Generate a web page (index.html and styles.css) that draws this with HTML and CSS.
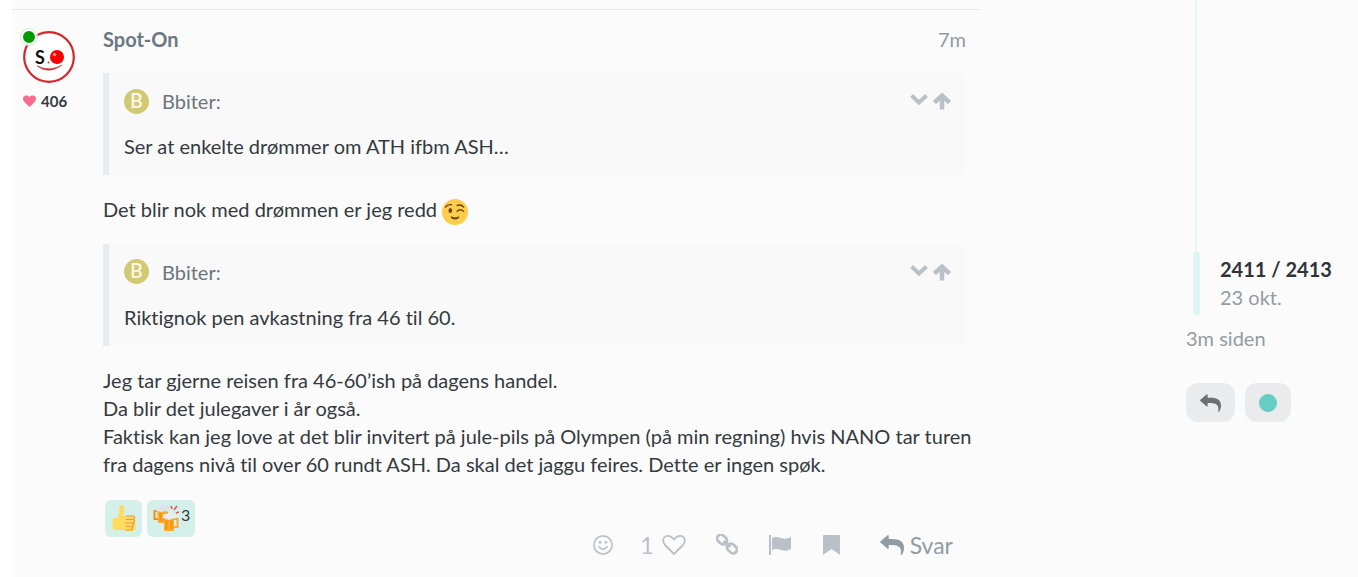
FILE: index.html
```
<!DOCTYPE html>
<html lang="nb">
<head>
    <meta charset="UTF-8">
    <meta name="viewport" content="width=device-width, initial-scale=1.0">
    <title>Spot-On</title>
    <link rel="stylesheet" href="styles.css">
</head>
<body>
    <svg class="sprite" aria-hidden="true">
        <symbol id="reply" viewBox="0 0 24 20"><path d="M.4 7.600Q-.2 7 .4 6.400L7.500.3Q8.700-.4 8.700 1V4H12c8 0 12 3 12 9 0 3-1 5-2 6.600-.5.800-1.500.4-1.200-.6 1-6-1.300-8.500-8.300-9H8.700v3q0 1.400-1.200.7z"/></symbol>
        <symbol id="chevron-down" viewBox="0 0 18 18"><path d="M1.500 3.500L9 10.500l7.500-7" fill="none" stroke="currentColor" stroke-width="4"/></symbol>
        <symbol id="arrow-up" viewBox="0 0 18 18"><path d="M1.500 10.500L9 3.500l7.500 7M9 4.500V17.500" fill="none" stroke="currentColor" stroke-width="4.500"/></symbol>
    </svg>
    <div class="page">
        <article class="post">
            <aside class="post-avatar">
                <div class="avatar">
                    <svg viewBox="0 0 52 52" aria-hidden="true">
                        <circle cx="26" cy="26" r="24.800" fill="#fff" stroke="#d2262b" stroke-width="2.200"/>
                        <circle cx="34" cy="26" r="7" fill="#f80000"/>
                        <circle cx="31.500" cy="23.500" r="1.800" fill="#ff8a80"/>
                        <circle cx="25.500" cy="31.500" r="1" fill="#c33"/>
                        <path d="M14 35q12 9 25-1q-12 7-25 1z" fill="#c8373a" stroke="#c8373a" stroke-width=".6"/>
                    </svg>
                    <span class="avatar-letter">S</span>
                    <span class="online"></span>
                </div>
                <div class="likes">
                    <svg viewBox="0 0 14 13" aria-hidden="true"><path d="M7 13L1 7C-1 4 0 1 3 .5 5 .2 6 1 7 2.300 8 1 9 .2 11 .5c3 .5 4 3.500 2 6.500z" fill="#fa6c8d"/></svg>
                    <span>406</span>
                </div>
            </aside>
            <div class="post-body">
                <header class="post-header">
                    <a class="username" href="#">Spot-On</a>
                    <a class="post-date" href="#">7m</a>
                </header>
                <blockquote class="quote">
                    <div class="quote-title">
                        <span class="quote-avatar">B</span>
                        <span>Bbiter:</span>
                        <div class="quote-controls">
                            <button aria-label="Utvid"><svg><use href="#chevron-down"/></svg></button>
                            <button aria-label="Gå til innlegg"><svg><use href="#arrow-up"/></svg></button>
                        </div>
                    </div>
                    <p>Ser at enkelte drømmer om ATH ifbm ASH…</p>
                </blockquote>
                <p>Det blir nok med drømmen er jeg redd
                    <svg class="emoji" viewBox="0 0 36 36" role="img" aria-label="wink">
                        <circle cx="18" cy="18" r="18" fill="#ffcc4d"/>
                        <ellipse cx="11.500" cy="16" rx="2.500" ry="3.500" fill="#664500"/>
                        <path d="M5 11q3-4 8-3M21 9q5-2 9 2M21 17q4-4 9 0" fill="none" stroke="#664500" stroke-width="2" stroke-linecap="round"/>
                        <path d="M12 24q6 3 12 0c0 6-12 6-12 0z" fill="#664500"/>
                    </svg>
                </p>
                <blockquote class="quote">
                    <div class="quote-title">
                        <span class="quote-avatar">B</span>
                        <span>Bbiter:</span>
                        <div class="quote-controls">
                            <button aria-label="Utvid"><svg><use href="#chevron-down"/></svg></button>
                            <button aria-label="Gå til innlegg"><svg><use href="#arrow-up"/></svg></button>
                        </div>
                    </div>
                    <p>Riktignok pen avkastning fra 46 til 60.</p>
                </blockquote>
                <p class="wide">Jeg tar gjerne reisen fra 46-60’ish på dagens handel.<br>
                Da blir det julegaver i år også.<br>
                Faktisk kan jeg love at det blir invitert på jule-pils på Olympen (på min regning) hvis NANO tar turen fra dagens nivå til over 60 rundt ASH. Da skal det jaggu feires. Dette er ingen spøk.</p>
                <footer class="post-footer">
                    <div class="reactions">
                        <button class="reaction" aria-label="Tommel opp">
                            <svg viewBox="0 0 25 26" aria-hidden="true">
                                <path d="M1 15q0-2 2-2h2q2-1 2.500-4L8 3q0-3 2-3 3 0 3 4l-1 7q3-1 5 1v13H5q-4 0-4-3z" fill="#ffdb5e"/>
                                <rect x="12" y="11" width="12" height="15" rx="3" fill="#ffdb5e"/>
                                <path d="M14 11h8q2 2 0 3.500h-8M14 14.500h8q2 2 0 3.500h-8M14 18h7q2 2 0 3.500h-7M14 21.500h6q2 2 0 3.500h-6" fill="none" stroke="#ee9547" stroke-width="1.200"/>
                            </svg>
                        </button>
                        <button class="reaction">
                            <svg viewBox="0 0 26 26" aria-hidden="true">
                                <path d="M5 6H1.500v8H6" fill="none" stroke="#f4900c" stroke-width="2"/>
                                <path d="M4 5h11v13H5z" fill="#ffac33"/>
                                <path d="M7.500 8v8M11 8v8" stroke="#f4900c" stroke-width="2"/>
                                <path d="M3 6q-1-4 3-4 2-3 5-2 5-1 6 3l-1 4-4-1-3 1z" fill="#dde5e8"/>
                                <path d="M21 14h3.500v8H21" fill="none" stroke="#ffac33" stroke-width="2"/>
                                <path d="M11 12h10v14H11z" fill="#ffac33"/>
                                <path d="M13.500 15v9M18.500 15v9" stroke="#f4900c" stroke-width="2"/>
                                <path d="M10 13q-1-5 4-4 4-3 6 0 4 0 3 4l-5 1-2 1-2-1z" fill="#e8edef"/>
                                <path d="M19 4l-1-3M21 5l3-4M23 8l3-1" stroke="#e75a47" stroke-width="1.500"/>
                            </svg>
                            <span>3</span>
                        </button>
                    </div>
                    <div class="actions">
                        <button class="react" aria-label="Reager">
                            <svg viewBox="0 0 22 22" aria-hidden="true">
                                <circle cx="11" cy="11" r="10" fill="none" stroke="currentColor" stroke-width="1.800"/>
                                <circle cx="7.800" cy="8" r="1.500"/><circle cx="14.200" cy="8" r="1.500"/>
                                <path d="M6.500 13q4.500 5 9 0" fill="none" stroke="currentColor" stroke-width="1.800" stroke-linecap="round"/>
                            </svg>
                        </button>
                        <button>
                            <span>1</span>
                            <svg class="heart" viewBox="0 0 24 22" aria-hidden="true"><path d="M12 20L3 11C0 7 1 3 4.500 2 8 1 10 3 12 5.500 14 3 16 1 19.500 2 23 3 24 7 21 11z" fill="none" stroke="currentColor" stroke-width="1.800" stroke-linejoin="round"/></svg>
                        </button>
                        <button aria-label="Lenke">
                            <svg viewBox="0 0 22 22" aria-hidden="true">
                                <g transform="rotate(42 11 10)" fill="none" stroke="currentColor" stroke-width="2.800">
                                    <rect x="-1" y="6.200" width="10.500" height="7.600" rx="3.500"/>
                                    <rect x="12.500" y="6.200" width="10.500" height="7.600" rx="3.500"/>
                                    <path d="M6.500 10h9"/>
                                </g>
                            </svg>
                        </button>
                        <button aria-label="Rapporter">
                            <svg class="flag" viewBox="0 0 24 22" aria-hidden="true">
                                <path d="M1 1h2v20H1zM4 4q4-2 9 0t10-1v12q-5 3-10 1t-9 0z"/>
                            </svg>
                        </button>
                        <button aria-label="Bokmerk">
                            <svg viewBox="0 0 22 22" aria-hidden="true"><path d="M1 2q0-1 1-1h15q1 0 1 1v19l-8.500-6L1 21z"/></svg>
                        </button>
                        <button class="reply">
                            <svg class="reply-icon" aria-hidden="true"><use href="#reply"/></svg>
                            <span>Svar</span>
                        </button>
                    </div>
                </footer>
            </div>
        </article>
        <nav class="timeline">
            <div class="timeline-line"></div>
            <div class="timeline-scroller">
                <strong>2411 / 2413</strong>
                <span>23 okt.</span>
            </div>
            <a class="timeline-ago" href="#">3m siden</a>
            <div class="timeline-buttons">
                <button aria-label="Svar"><svg><use href="#reply"/></svg></button>
                <button aria-label="Følger"><span class="dot"></span></button>
            </div>
        </nav>
    </div>
</body>
</html>
```
FILE: styles.css
```
* {
    box-sizing: border-box;
    margin: 0;
    padding: 0;
}

body {
    background: #fff;
    color: #343a40;
    font-family: Lato, sans-serif;
    font-size: 20px;
    font-variant-ligatures: none;
    line-height: 28px;
}

a {
    color: inherit;
    text-decoration: none;
}

button {
    background: none;
    border: none;
    color: inherit;
    font: inherit;
    cursor: pointer;
    display: flex;
    align-items: center;
}

svg {
    fill: currentColor;
    flex-shrink: 0;
}

.sprite {
    display: none;
}

.page {
    display: flex;
    min-height: 100vh;
    margin-left: 12px;
    background: #fbfbfb;
}

/* innlegg */
.post {
    flex: 1;
    display: flex;
    align-self: flex-start;
    margin-top: 9px;
    padding: 15px 14px 15px 11px;
    border-top: 1px solid #e6e8ea;
}

.post-avatar {
    width: 80px;
    flex-shrink: 0;
    padding-top: 6px;
}

.avatar {
    position: relative;
    width: 52px;
    height: 52px;
}

.avatar svg {
    display: block;
    width: 52px;
    height: 52px;
}

.avatar-letter {
    position: absolute;
    top: 12px;
    left: 12px;
    color: #111;
    font-size: 18px;
    font-weight: 700;
}

.online {
    position: absolute;
    top: -2px;
    left: -2px;
    width: 16px;
    height: 16px;
    border: 2px solid #fff;
    border-radius: 50%;
    background: #090;
    outline: 1px solid #d5ecd5;
}

.likes {
    display: flex;
    align-items: center;
    gap: 5px;
    margin-top: 4px;
    font-size: 15px;
    font-weight: 700;
}

.likes svg {
    width: 13px;
    height: 12px;
}

.post-body {
    flex: 1;
    min-width: 0;
}

.post-header {
    display: flex;
    justify-content: space-between;
    margin-bottom: 16px;
}

.username {
    color: #6c7781;
    font-weight: 700;
}

.post-date {
    color: #919ba4;
}

.quote {
    margin: 20px 0;
    padding: 14px 15px 15px;
    border-left: 6px solid #e9ebed;
    background: #f9f9f9;
}

.quote-title {
    display: flex;
    align-items: center;
    margin-bottom: 17px;
    color: #6c757d;
}

.quote-avatar {
    width: 25px;
    height: 25px;
    margin-right: 13px;
    border-radius: 50%;
    background: #d1c973;
    color: #f8f6e3;
    font-family: Roboto, sans-serif;
    font-weight: 500;
    line-height: 25px;
    text-align: center;
}

.quote-controls {
    display: flex;
    gap: 5px;
    margin-left: auto;
    color: #b9c0c7;
}

.quote-controls svg {
    width: 18px;
    height: 18px;
}

.emoji {
    width: 26px;
    height: 26px;
    margin: -1px 0;
    vertical-align: middle;
}

/* long lines may reach into the post's own padding */
.wide {
    margin-right: -12px;
}

.post-footer {
    display: flex;
    align-items: flex-start;
    justify-content: space-between;
    margin-top: 22px;
    padding-left: 2px;
}

.reactions {
    display: flex;
    gap: 5px;
}

.reaction {
    height: 37px;
    padding: 0 5px 0 6px;
    border-radius: 6px;
    background: #d5efeb;
    font-size: 16px;
}

.reaction svg {
    width: 26px;
    height: 26px;
}

.reaction span {
    align-self: flex-start;
    margin-left: 2px;
    line-height: 30px;
}

.actions {
    display: flex;
    gap: 30px;
    margin-top: 31px;
    padding-right: 13px;
    color: #b9c0c7;
    font-size: 23px;
}

.actions button {
    gap: 8px;
}

.actions svg {
    width: 22px;
    height: 22px;
}

.actions .react {
    margin-right: -3px;
}

.actions .react svg {
    width: 20px;
    height: 20px;
}

.actions .heart,
.actions .flag {
    width: 24px;
}

.actions .reply {
    gap: 6px;
    margin-left: 6px;
    color: #919ba4;
}

.actions .reply-icon {
    width: 24px;
    height: 20px;
}

/* tidslinje */
.timeline {
    width: 378px;
    flex-shrink: 0;
    padding-left: 206px;
    color: #919ba4;
}

.timeline-line {
    width: 2px;
    height: 252px;
    margin-left: 9px;
    background: #e6f7f7;
}

.timeline-scroller {
    display: flex;
    flex-direction: column;
    position: relative;
    height: 63px;
    padding: 3px 0 0 34px;
}

.timeline-scroller::before {
    content: "";
    position: absolute;
    top: 0;
    left: 7px;
    width: 7px;
    height: 63px;
    border-radius: 3px;
    background: #dff6f4;
}

.timeline-scroller strong {
    color: #303439;
}

.timeline-ago {
    display: block;
    margin-top: 9px;
}

.timeline-buttons {
    display: flex;
    gap: 10px;
    margin-top: 31px;
}

.timeline-buttons button {
    height: 39px;
    padding: 0 14px;
    border-radius: 12px;
    background: #e9ebed;
    color: #6b7075;
}

.timeline-buttons svg {
    width: 21px;
    height: 18px;
}

.dot {
    width: 18px;
    height: 18px;
    border-radius: 50%;
    background: #66ccc4;
}
```
